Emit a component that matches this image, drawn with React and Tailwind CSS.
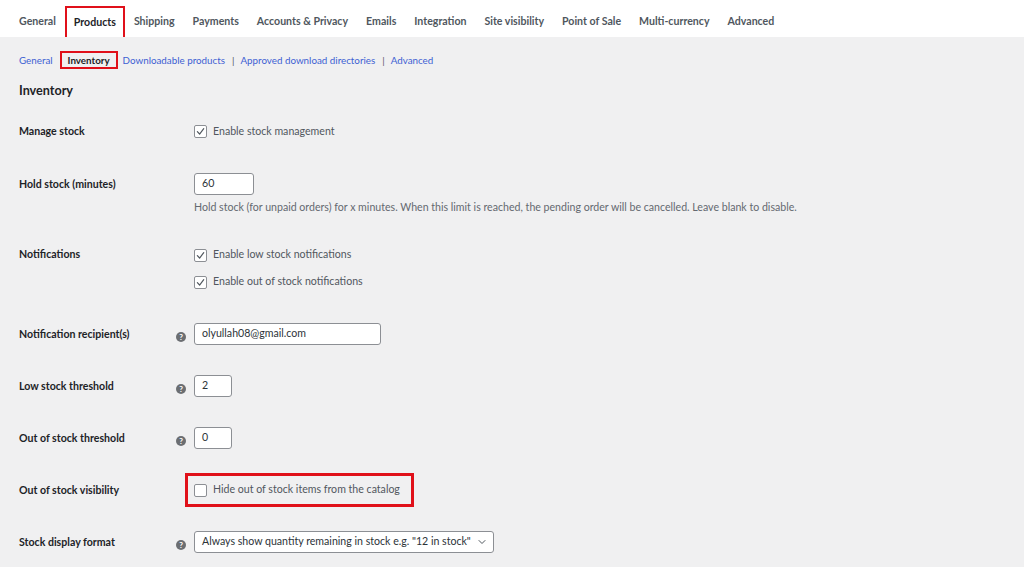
import { ChevronDown } from 'lucide-react'

const tabs = [
  'General',
  'Products',
  'Shipping',
  'Payments',
  'Accounts & Privacy',
  'Emails',
  'Integration',
  'Site visibility',
  'Point of Sale',
  'Multi-currency',
  'Advanced',
]

function Help() {
  return (
    <span className="w-[10px] h-[10px] rounded-full bg-[#6b6e72] text-white text-[8px] font-bold leading-none flex items-center justify-center">
      ?
    </span>
  )
}

function Check({ checked }) {
  return (
    <span className="w-[13px] h-[13px] rounded-[2px] border border-[#8c8f94] bg-white flex items-center justify-center shrink-0">
      {checked && (
        <svg width="9" height="9" viewBox="0 0 10 10" fill="none">
          <path d="M1.5 5.2 L4 7.8 L8.6 1.8" stroke="#50575e" strokeWidth="1.3" strokeLinecap="round" strokeLinejoin="round" />
        </svg>
      )}
    </span>
  )
}

function Row({ label, help, className = '', children }) {
  return (
    <div className={`flex ${className}`}>
      <div className="w-[157px] shrink-0 font-bold text-[#1d2327] leading-[22px]">{label}</div>
      <div className="w-[18px] shrink-0 flex">{help && <div className="mt-[6px]"><Help /></div>}</div>
      <div className="flex-1 whitespace-nowrap">{children}</div>
    </div>
  )
}

export default function App() {
  return (
    <div className="min-h-[567px] bg-[#f0f0f1] text-[10.6px] text-[#50575e]" style={{ fontFamily: 'Lato, "Open Sans", sans-serif' }}>
      {/* Top tabs */}
      <nav className="bg-white h-[37px] flex items-end px-[10px]">
        {tabs.map((t) =>
          t === 'Products' ? (
            <span key={t} className="h-[31px] px-[7px] pt-[1px] border-2 border-b-0 border-[#e0101a] flex items-center font-bold text-[#1d2327]">
              {t}
            </span>
          ) : (
            <span key={t} className="h-[31px] px-[9px] pt-[1px] flex items-center font-bold">
              {t}
            </span>
          )
        )}
      </nav>

      <div className="px-[19px]">
        {/* Sub navigation */}
        <div className="mt-[14px] flex items-center text-[9.8px] text-[#3d5fd3]">
          <span>General</span>
          <span className="ml-[7px] h-[18px] px-[6px] border-2 border-[#e0101a] flex items-center font-bold text-[#1d2327]">Inventory</span>
          <span className="ml-[5px]">Downloadable products</span>
          <span className="ml-[7px] text-[#50575e]">|</span>
          <span className="ml-[6px]">Approved download directories</span>
          <span className="ml-[7px] text-[#50575e]">|</span>
          <span className="ml-[6px]">Advanced</span>
        </div>

        <h2 className="mt-[14px] text-[12.6px] font-bold text-[#1d2327] leading-[16px]">Inventory</h2>

        <Row label="Manage stock" className="mt-[21px] h-[22px] items-center">
          <label className="flex items-center gap-[6px] pt-[1px]">
            <Check checked />
            <span>Enable stock management</span>
          </label>
        </Row>

        <Row label="Hold stock (minutes)" className="mt-[31px]">
          <div>
            <div className="w-[60px] h-[22px] bg-white border border-[#8c8f94] rounded-[3px] flex items-center px-[7px] text-[#2c3338]">60</div>
            <p className="mt-[5px] leading-[14px] text-[#646970]">
              Hold stock (for unpaid orders) for x minutes. When this limit is reached, the pending order will be cancelled. Leave blank to disable.
            </p>
          </div>
        </Row>

        <Row label="Notifications" className="mt-[29px]">
          <div className="flex flex-col gap-[5px] pt-[1px]">
            <label className="h-[22px] flex items-center gap-[6px]">
              <Check checked />
              <span>Enable low stock notifications</span>
            </label>
            <label className="h-[22px] flex items-center gap-[6px]">
              <Check checked />
              <span>Enable out of stock notifications</span>
            </label>
          </div>
        </Row>

        <Row label="Notification recipient(s)" help className="mt-[30px] items-center">
          <div className="w-[187px] h-[22px] bg-white border border-[#8c8f94] rounded-[3px] flex items-center px-[7px] text-[#2c3338]">
            olyullah08@gmail.com
          </div>
        </Row>

        <Row label="Low stock threshold" help className="mt-[30px] items-center">
          <div className="w-[38px] h-[22px] bg-white border border-[#8c8f94] rounded-[3px] flex items-center px-[7px] text-[#2c3338]">2</div>
        </Row>

        <Row label="Out of stock threshold" help className="mt-[30px] items-center">
          <div className="w-[38px] h-[22px] bg-white border border-[#8c8f94] rounded-[3px] flex items-center px-[7px] text-[#2c3338]">0</div>
        </Row>

        <Row label="Out of stock visibility" className="mt-[24px] items-center">
          <div className="-ml-[9px] w-[229px] h-[34px] border-[3px] border-[#e0101a] flex items-center gap-[6px] pl-[6px]">
            <span className="w-[13px] h-[13px] rounded-[2px] border border-[#8c8f94] bg-white" />
            <span>Hide out of stock items from the catalog</span>
          </div>
        </Row>

        <Row label="Stock display format" help className="mt-[24px] items-center">
          <div className="w-[300px] h-[22px] bg-white border border-[#8c8f94] rounded-[3px] flex items-center justify-between pl-[7px] pr-[5px] text-[#2c3338]">
            <span>Always show quantity remaining in stock e.g. "12 in stock"</span>
            <ChevronDown size={12} strokeWidth={2} color="#50575e" />
          </div>
        </Row>
      </div>
    </div>
  )
}
